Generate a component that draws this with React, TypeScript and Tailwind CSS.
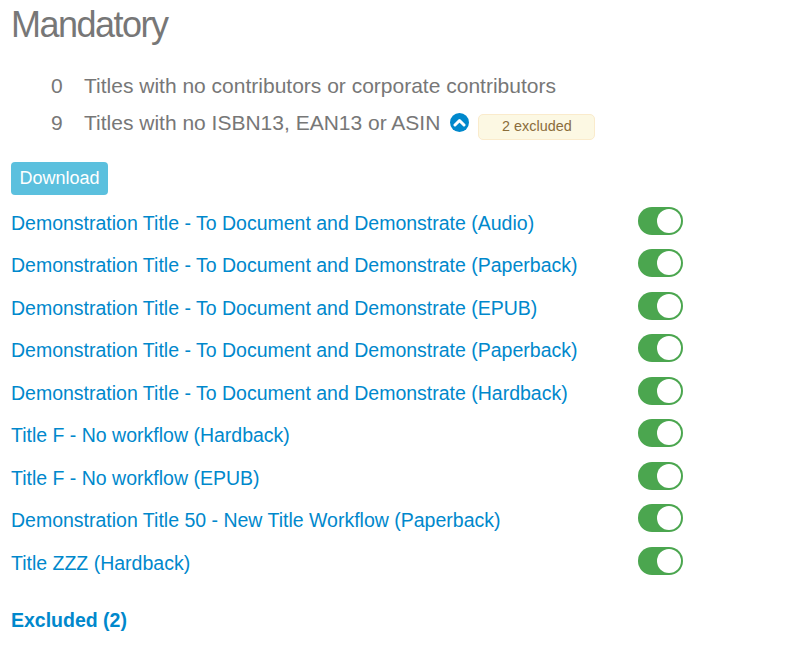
const titles = [
  "Demonstration Title - To Document and Demonstrate (Audio)",
  "Demonstration Title - To Document and Demonstrate (Paperback)",
  "Demonstration Title - To Document and Demonstrate (EPUB)",
  "Demonstration Title - To Document and Demonstrate (Paperback)",
  "Demonstration Title - To Document and Demonstrate (Hardback)",
  "Title F - No workflow (Hardback)",
  "Title F - No workflow (EPUB)",
  "Demonstration Title 50 - New Title Workflow (Paperback)",
  "Title ZZZ (Hardback)",
];

const Toggle = () => (
  <span className="flex h-[28px] w-[45px] items-center justify-end rounded-full bg-[#4ba64f] pr-[2px]">
    <span className="h-[24px] w-[24px] rounded-full bg-white" />
  </span>
);

const App = () => {
  return (
    <div className="h-[649px] w-[795px] overflow-hidden bg-white pl-[11px] font-['Liberation_Sans',sans-serif] text-[19.5px] text-[#777777]">
      <h1 className="h-[50px] text-[36px] leading-[50px] tracking-[-1.5px]">Mandatory</h1>

      <div className="mt-[17px] pl-[40px] text-[21px]">
        <div className="flex h-[37px] items-center">
          <span className="w-[33px]">0</span>
          <span>Titles with no contributors or corporate contributors</span>
        </div>
        <div className="flex h-[37px] items-center">
          <span className="w-[33px]">9</span>
          <span>Titles with no ISBN13, EAN13 or ASIN</span>
          <span className="ml-[10px] flex h-[19px] w-[19px] items-center justify-center rounded-full bg-[#0088cc]">
            <svg width="13" height="9" viewBox="0 0 13 9" fill="none" stroke="white" strokeWidth="3" strokeLinecap="round" strokeLinejoin="round">
              <path d="M2 7 L6.5 2.5 L11 7" />
            </svg>
          </span>
          <span className="ml-[9px] mt-[8px] flex h-[26px] w-[117px] items-center justify-center rounded-[5px] border border-[#faebcc] bg-[#fcf8e3] text-[14.4px] text-[#8a6d3b]">
            2 excluded
          </span>
        </div>
      </div>

      <button className="mt-[21px] block h-[33px] w-[97px] rounded-[4px] bg-[#5bc0de] text-center text-[18px] text-white">
        Download
      </button>

      <div className="mt-[7px] w-[672px]">
        {titles.map((title, i) => (
          <div key={i} className="flex h-[42.5px] items-center justify-between">
            <a className="text-[#0088cc]">{title}</a>
            <span className="-mt-[5px]">
              <Toggle />
            </span>
          </div>
        ))}
      </div>

      <div className="mt-[21px] font-bold text-[#0088cc]">Excluded (2)</div>
    </div>
  );
};

export default App;
